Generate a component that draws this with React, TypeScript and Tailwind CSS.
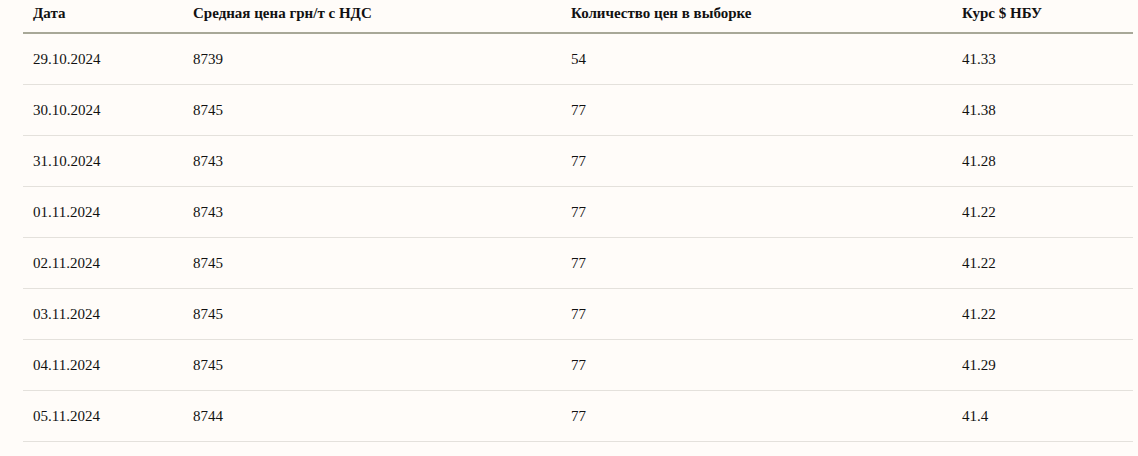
import React from 'react';

const rows = [
  { date: '29.10.2024', price: '8739', count: '54', rate: '41.33' },
  { date: '30.10.2024', price: '8745', count: '77', rate: '41.38' },
  { date: '31.10.2024', price: '8743', count: '77', rate: '41.28' },
  { date: '01.11.2024', price: '8743', count: '77', rate: '41.22' },
  { date: '02.11.2024', price: '8745', count: '77', rate: '41.22' },
  { date: '03.11.2024', price: '8745', count: '77', rate: '41.22' },
  { date: '04.11.2024', price: '8745', count: '77', rate: '41.29' },
  { date: '05.11.2024', price: '8744', count: '77', rate: '41.4' },
];

export default function App() {
  return (
    <div className="min-h-[456px] bg-[#fffcf9] pl-[23px] pr-[5px] text-[#111] [font-family:'Liberation_Serif',serif]">
      <table className="w-full border-collapse text-[15px] leading-5">
        <thead>
          <tr className="border-b-2 border-[#a8a898]">
            <th className="w-[160px] pb-[9px] pl-[10px] pt-[3px] text-left font-bold">Дата</th>
            <th className="w-[378px] pb-[9px] pl-[10px] pt-[3px] text-left font-bold">Средная цена грн/т с НДС</th>
            <th className="w-[391px] pb-[9px] pl-[10px] pt-[3px] text-left font-bold">Количество цен в выборке</th>
            <th className="pb-[9px] pl-[10px] pt-[3px] text-left font-bold">Курс $ НБУ</th>
          </tr>
        </thead>
        <tbody>
          {rows.map((r) => (
            <tr key={r.date} className="h-[51px] border-b border-[#e4e1dc]">
              <td className="pl-[10px] pt-px">{r.date}</td>
              <td className="pl-[10px] pt-px">{r.price}</td>
              <td className="pl-[10px] pt-px">{r.count}</td>
              <td className="pl-[10px] pt-px">{r.rate}</td>
            </tr>
          ))}
        </tbody>
      </table>
    </div>
  );
}
